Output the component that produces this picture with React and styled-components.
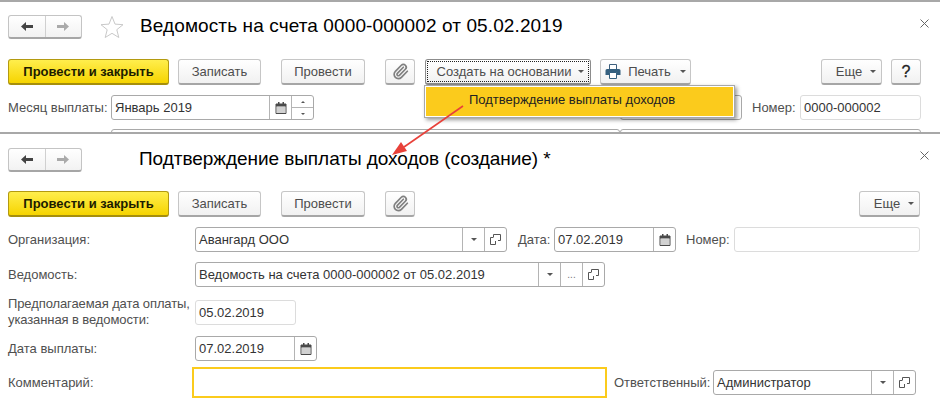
import React from "react"
import styled, { createGlobalStyle } from "styled-components"
import { Paperclip } from "lucide-react"

const GlobalStyle = createGlobalStyle`
  html, body {
    margin: 0;
    padding: 0;
    background: #fff;
    font-family: "Liberation Sans", Arial, sans-serif;
    font-size: 13px;
    color: #4d4d4d;
  }
`

const Page = styled.div`
  position: relative;
  width: 940px;
  height: 403px;
  overflow: hidden;
  background: #fff;
`

const Panel = styled.section`
  height: ${(p) => p.$height}px;
  box-sizing: border-box;
  border-top: 2px solid #a8a8a8;
  overflow: hidden;
  padding: 0 19px 0 8px;
`

const Header = styled.header`
  height: ${(p) => p.$height}px;
  display: flex;
  align-items: center;
`

const NavGroup = styled.div`
  width: 74px;
  height: 24px;
  box-sizing: border-box;
  display: flex;
  border: 1px solid #c4c4c4;
  border-bottom: 2px solid #a6a6a6;
  border-radius: 3px;
  background: linear-gradient(#fff, #f2f2f2);
`

const NavCell = styled.span`
  flex: 1;
  display: flex;
  align-items: center;
  justify-content: center;
  & + & {
    border-left: 1px solid #d0d0d0;
  }
`

const NavArrow = styled.svg`
  width: 14px;
  height: 11px;
  transform: ${(p) => (p.$flip ? "scaleX(-1)" : "none")};
`

const StarIcon = styled.svg`
  width: 24px;
  height: 24px;
  margin-left: 18px;
  flex: none;
`

const Title = styled.h1`
  margin: -2px 0 0 ${(p) => p.$gap}px;
  font-size: 19px;
  font-weight: 400;
  letter-spacing: ${(p) => p.$spacing}px;
  color: #000;
  white-space: nowrap;
`

const Close = styled.svg`
  width: 9px;
  height: 9px;
  margin-left: auto;
  margin-right: -8px;
  margin-top: -${(p) => p.$lift}px;
`

const Toolbar = styled.div`
  display: flex;
  margin-top: ${(p) => p.$top || 0}px;
  height: 26px;
`

const Button = styled.button`
  width: ${(p) => p.$w}px;
  margin-left: ${(p) => p.$gap || 0}px;
  padding: 0 0 0 ${(p) => p.$inset || 0}px;
  height: 26px;
  box-sizing: border-box;
  display: flex;
  align-items: center;
  justify-content: center;
  gap: ${(p) => p.$space ?? 6}px;
  flex: none;
  font: inherit;
  color: #4d4d4d;
  border: 1px solid #c6c6c6;
  border-bottom: 2px solid #a6a6a6;
  border-radius: 3px;
  background: linear-gradient(#fff, #f1f1f1);
`

const PrimaryButton = styled(Button)`
  color: #1c1c00;
  font-weight: 700;
  border: 1px solid #b39a10;
  border-bottom: 2px solid #a68f0c;
  background: linear-gradient(#ffee4d, #f6d400);
`

const FocusedButton = styled(Button)`
  border: 1px solid #8c8c8c;
  border-bottom: 2px solid #8c8c8c;
  position: relative;
  &::after {
    content: "";
    position: absolute;
    inset: 1px;
    border: 1px dotted #222;
  }
`

const Caret = styled.i`
  width: 0;
  height: 0;
  margin-left: ${(p) => (p.$flush ? 0 : 2)}px;
  border-left: 3px solid transparent;
  border-right: 3px solid transparent;
  border-top: 3px solid #555;
`

const HelpMark = styled.span`
  font-size: 16px;
  color: #222;
  -webkit-text-stroke: 0.3px #222;
`

const Row = styled.div`
  display: flex;
  align-items: center;
  height: ${(p) => p.$h || 25}px;
  margin-top: ${(p) => p.$top || 0}px;
`

const Label = styled.label`
  width: ${(p) => (p.$w ? `${p.$w}px` : "auto")};
  margin-left: ${(p) => p.$gap || 0}px;
  flex: none;
  white-space: nowrap;
  line-height: 16px;
  letter-spacing: ${(p) => (p.$tight ? "-0.1px" : "0")};
  color: #4f4f4f;
`

const Field = styled.div`
  width: ${(p) => p.$w}px;
  margin-left: ${(p) => p.$gap || 0}px;
  height: 25px;
  box-sizing: border-box;
  flex: none;
  display: flex;
  background: #fff;
  border: 1px solid ${(p) => (p.$light ? "#dcdcdc" : "#a9a9a9")};
  border-radius: 3px;
`

const FieldText = styled.span`
  flex: 1;
  min-width: 0;
  padding-left: 3px;
  line-height: 23px;
  color: #333;
  white-space: nowrap;
  overflow: hidden;
`

const FieldButton = styled.span`
  width: 21px;
  flex: none;
  display: flex;
  align-items: center;
  justify-content: center;
  border-left: 1px solid #b4b4b4;
  color: #777;
  font-size: 10px;
`

const Spin = styled.span`
  width: 21px;
  flex: none;
  display: flex;
  flex-direction: column;
  border-left: 1px solid #b4b4b4;
`

const SpinPart = styled.span`
  flex: 1;
  display: flex;
  align-items: center;
  justify-content: center;
  & + & {
    border-top: 1px solid #b4b4b4;
  }
`

const SpinArrow = styled.i`
  width: 0;
  height: 0;
  border-left: 2px solid transparent;
  border-right: 2px solid transparent;
  ${(p) => (p.$up ? "border-bottom: 2px solid #555;" : "border-top: 2px solid #555;")}
`

const CommentBox = styled.div`
  width: 415px;
  height: 31px;
  box-sizing: border-box;
  margin-left: -3px;
  flex: none;
  border: 2px solid #fbcb1c;
`

const Menu = styled.div`
  position: absolute;
  left: 424px;
  top: 85px;
  width: 311px;
  height: 33px;
  box-sizing: border-box;
  border: 1px solid #a8a8a8;
  padding: 1px;
  background: #fff;
  box-shadow: 2px 2px 4px rgba(0, 0, 0, 0.4);
`

const MenuItem = styled.div`
  height: 100%;
  padding-left: 43px;
  line-height: 26px;
  color: #222;
  background: #fbcb1c;
`

const ArrowOverlay = styled.svg`
  position: absolute;
  left: 385px;
  top: 100px;
`

const Calendar = () => (
  <svg width="12" height="12" viewBox="0 0 12 12">
    <path d="M1 2h10v9.500H1z" fill="#fff" stroke="#4a4a4a" />
    <path d="M1 2h10v2.500H1zM3 0h1.500v2H3zM7.500 0H9v2H7.500z" fill="#4a4a4a" />
    <path d="M2.500 6h7M2.500 8h7M2.500 10h7" stroke="#4a4a4a" strokeDasharray="1 1" />
  </svg>
)

const OpenIcon = () => (
  <svg width="11" height="11" viewBox="0 0 11 11" fill="none" stroke="#555">
    <path d="M3.500 3V.5h7v6H8" />
    <path d="M.5 3.500h7v7h-7z" fill="#fff" stroke="none" />
    <path d="M.5 3.500h3M.5 3.500v7h5V7" />
  </svg>
)

const Printer = () => (
  <svg width="16" height="15" viewBox="0 0 16 15">
    <path d="M4.500 .5h7v5h-7z" fill="#fff" stroke="#3d5f7d" />
    <path d="M2 5h12a1.500 1.500 0 0 1 1.500 1.500V11h-15V6.500A1.500 1.500 0 0 1 2 5z" fill="#35607f" />
    <path d="M4.500 8.500h7v6h-7z" fill="#fff" stroke="#35607f" />
  </svg>
)

const Nav = () => (
  <NavGroup>
    <NavCell>
      <NavArrow viewBox="0 0 14 11">
        <path d="M1 5.500 6 1v3h7v3H6v3z" fill="#444" />
      </NavArrow>
    </NavCell>
    <NavCell>
      <NavArrow viewBox="0 0 14 11" $flip>
        <path d="M1 5.500 6 1v3h7v3H6v3z" fill="#aaa" />
      </NavArrow>
    </NavCell>
  </NavGroup>
)

const CloseIcon = ({ lift }) => (
  <Close viewBox="0 0 9 9" $lift={lift}>
    <path d="M.5.5l8 8M8.500.5l-8 8" stroke="#666" />
  </Close>
)

const Clip = () => <Paperclip size={17} color="#808080" strokeWidth={2.4} />

const DropButton = () => (
  <FieldButton>
    <Caret $flush />
  </FieldButton>
)

const OpenButton = () => (
  <FieldButton>
    <OpenIcon />
  </FieldButton>
)

const CalendarButton = () => (
  <FieldButton>
    <Calendar />
  </FieldButton>
)

export default function App() {
  return (
    <Page>
      <GlobalStyle />
      <Panel $height={132}>
        <Header $height={49}>
          <Nav />
          <StarIcon viewBox="0 0 24 24">
            <path
              d="M12 1.500l3 7.600 8 .6-6.200 5 2 7.800L12 18.300 5.200 22.500l2-7.800L1 9.700l8-.6z"
              fill="#fff"
              stroke="#c9c9c9"
            />
          </StarIcon>
          <Title $gap={16} $spacing={0.11}>
            Ведомость на счета 0000-000002 от 05.02.2019
          </Title>
          <CloseIcon lift={7} />
        </Header>
        <Toolbar $top={8}>
          <PrimaryButton $w={161}>Провести и закрыть</PrimaryButton>
          <Button $w={83} $gap={9}>Записать</Button>
          <Button $w={84} $gap={20}>Провести</Button>
          <Button $w={30} $gap={20}><Clip /></Button>
          <FocusedButton $w={166} $gap={10} $inset={5} $space={5}>Создать на основании <Caret /></FocusedButton>
          <Button $w={91} $gap={9} $space={7}><Printer /> Печать <Caret /></Button>
          <Button $w={61} $gap={130} $inset={9}>Еще <Caret /></Button>
          <Button $w={30} $gap={9}><HelpMark>?</HelpMark></Button>
        </Toolbar>
        <Row $top={10}>
          <Label $w={103}>Месяц выплаты:</Label>
          <Field $w={203}>
            <FieldText>Январь 2019</FieldText>
            <CalendarButton />
            <Spin>
              <SpinPart><SpinArrow $up /></SpinPart>
              <SpinPart><SpinArrow /></SpinPart>
            </Spin>
          </Field>
          <Field $w={122} $gap={306} />
          <Label $w={42} $gap={10}>Номер:</Label>
          <Field $w={121} $gap={6} $light>
            <FieldText>0000-000002</FieldText>
          </Field>
        </Row>
        <Row $top={9}>
          <Field $w={509} $gap={103} />
          <Field $w={301} />
        </Row>
      </Panel>
      <Panel $height={271}>
        <Header $height={51}>
          <Nav />
          <Title $gap={57} $spacing={-0.05}>
            Подтверждение выплаты доходов (создание) *
          </Title>
          <CloseIcon lift={9} />
        </Header>
        <Toolbar $top={6}>
          <PrimaryButton $w={161}>Провести и закрыть</PrimaryButton>
          <Button $w={83} $gap={9}>Записать</Button>
          <Button $w={84} $gap={20}>Провести</Button>
          <Button $w={30} $gap={20}><Clip /></Button>
          <Button $w={61} $gap={444} $inset={9}>Еще <Caret /></Button>
        </Toolbar>
        <Row $top={10}>
          <Label $w={187}>Организация:</Label>
          <Field $w={312}>
            <FieldText>Авангард ООО</FieldText>
            <DropButton />
            <OpenButton />
          </Field>
          <Label $w={31} $gap={11}>Дата:</Label>
          <Field $w={122} $gap={5}>
            <FieldText>07.02.2019</FieldText>
            <CalendarButton />
          </Field>
          <Label $w={42} $gap={10}>Номер:</Label>
          <Field $w={186} $gap={6} $light />
        </Row>
        <Row $top={10}>
          <Label $w={187}>Ведомость:</Label>
          <Field $w={410}>
            <FieldText>Ведомость на счета 0000-000002 от 05.02.2019</FieldText>
            <DropButton />
            <FieldButton>...</FieldButton>
            <OpenButton />
          </Field>
        </Row>
        <Row $top={12} $h={26}>
          <Label $w={187} $tight>
            Предполагаемая дата оплаты,
            <br />
            указанная в ведомости:
          </Label>
          <Field $w={101} $light>
            <FieldText>05.02.2019</FieldText>
          </Field>
        </Row>
        <Row $top={11}>
          <Label $w={187}>Дата выплаты:</Label>
          <Field $w={122}>
            <FieldText>07.02.2019</FieldText>
            <CalendarButton />
          </Field>
        </Row>
        <Row $top={6} $h={31}>
          <Label $w={187}>Комментарий:</Label>
          <CommentBox />
          <Label $w={94} $gap={7}>Ответственный:</Label>
          <Field $w={203} $gap={5}>
            <FieldText>Администратор</FieldText>
            <DropButton />
            <OpenButton />
          </Field>
        </Row>
      </Panel>
      <Menu>
        <MenuItem>Подтверждение выплаты доходов</MenuItem>
      </Menu>
      <ArrowOverlay width="80" height="60" viewBox="385 100 80 60">
        <path d="M463 106 L404 147" stroke="#e8413a" strokeWidth="1.600" fill="none" />
        <path d="M392 155 L401 142 L407 151z" fill="#e8413a" />
      </ArrowOverlay>
    </Page>
  )
}
